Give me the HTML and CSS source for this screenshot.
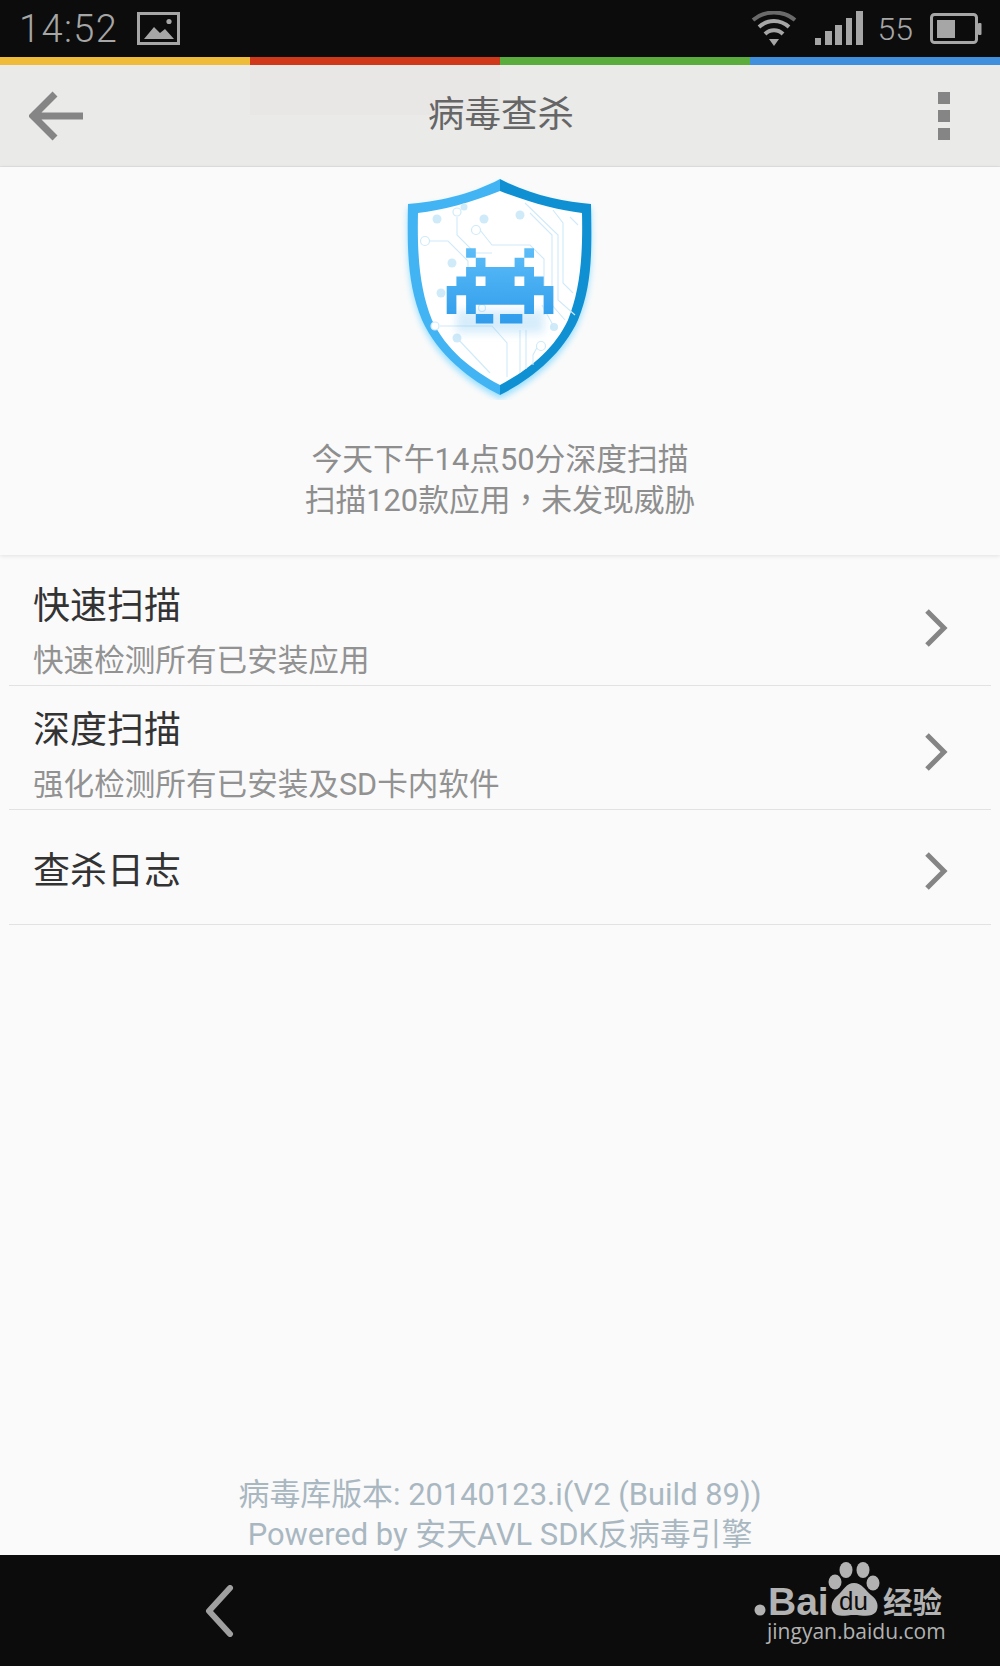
FILE: index.html
```html
<!DOCTYPE html>
<html lang="zh-CN">
<head>
  <meta charset="UTF-8" />
  <title>病毒查杀</title>
  <link rel="stylesheet" href="styles.css">
</head>
<body>
  <div class="page">
    <div class="status">
      <div class="status-left">
        <span class="clock">14:52</span>
        <svg class="pic-icon" width="44" height="34" viewBox="0 0 44 34">
          <rect x="1.5" y="1.5" width="40" height="30" fill="none" stroke="#a6a6a6" stroke-width="3"/>
          <path d="M7 27 L17 15 L23 21 L28 17 L37 27 Z" fill="#a6a6a6"/>
          <circle cx="32" cy="9.5" r="2.6" fill="#a6a6a6"/>
        </svg>
      </div>
      <div class="status-right">
        <svg class="wifi-icon" width="46" height="36" viewBox="0 0 46 36">
          <path d="M2 9 C14 -1 32 -1 44 9" fill="none" stroke="#6a6a6a" stroke-width="4"/>
          <path d="M8 16 C17 8 29 8 38 16" fill="none" stroke="#a6a6a6" stroke-width="4"/>
          <path d="M14 23 C19 18 27 18 32 23" fill="none" stroke="#a6a6a6" stroke-width="4"/>
          <path d="M18 28 L28 28 L23 35 Z" fill="#a6a6a6"/>
        </svg>
        <svg class="signal-icon" width="48" height="34" viewBox="0 0 48 34">
          <rect x="0" y="27" width="6" height="7" fill="#a6a6a6"/>
          <rect x="10" y="20" width="7" height="14" fill="#a6a6a6"/>
          <rect x="20" y="14" width="7" height="20" fill="#a6a6a6"/>
          <rect x="31" y="7" width="6" height="27" fill="#a6a6a6"/>
          <rect x="41" y="0" width="7" height="34" fill="#a6a6a6"/>
        </svg>
        <span class="level">55</span>
        <svg class="battery-icon" width="52" height="32" viewBox="0 0 52 32">
          <rect x="1.5" y="1.5" width="45" height="28" rx="3" fill="none" stroke="#a6a6a6" stroke-width="3"/>
          <rect x="7" y="7" width="18" height="18" fill="#a6a6a6"/>
          <rect x="48" y="10" width="3.5" height="12" rx="1" fill="#a6a6a6"/>
        </svg>
      </div>
    </div>

    <div class="stripe">
      <span class="stripe-yellow"></span>
      <span class="stripe-red"></span>
      <span class="stripe-green"></span>
      <span class="stripe-blue"></span>
    </div>

    <div class="toolbar">
      <svg class="back-arrow" width="54" height="50" viewBox="0 0 54 50">
        <path d="M54 25 L5 25 M26 3 L4 25 L26 47" fill="none" stroke="#858585" stroke-width="7"/>
      </svg>
      <div class="toolbar-title">病毒查杀</div>
      <div class="more-dots"><span></span><span></span><span></span></div>
    </div>

    <div class="summary">
      <svg class="shield" width="200" height="230" viewBox="20 5 200 230">
        <defs>
          <linearGradient id="invaderFill" x1="0" y1="0" x2="0" y2="1">
            <stop offset="0" stop-color="#5cbdf8"/>
            <stop offset="1" stop-color="#2f9ceb"/>
          </linearGradient>
          <filter id="glow" x="-20%" y="-20%" width="140%" height="140%">
            <feGaussianBlur stdDeviation="3"/>
          </filter>
          <filter id="shadow" x="-40%" y="-80%" width="180%" height="260%">
            <feGaussianBlur stdDeviation="0.45"/>
          </filter>
          <filter id="slight" x="-5%" y="-5%" width="110%" height="110%">
            <feGaussianBlur stdDeviation="0.05"/>
          </filter>
        </defs>
        <path d="M120 18 C150 34 185 41 211 43 C212 94 212 124 198 159 C182 194 150 219 120 234 C90 219 58 194 42 159 C28 124 27 94 28 43 C55 41 90 34 120 18 Z" fill="#9adfff" filter="url(#glow)"/>
        <path d="M120 14 C90 30 55 37 28 39 C27 90 28 120 42 155 C58 190 90 215 120 230 Z" fill="#42b4f4"/>
        <path d="M120 14 C150 30 185 37 211 39 C212 90 212 120 198 155 C182 190 150 215 120 230 Z" fill="#0f90d2"/>
        <path d="M120 26 C150 38 178 45 202 48 C203 92 200 125 188 155 C174 185 148 205 120 220 C92 205 66 185 52 155 C40 125 37 92 38 48 C62 45 90 38 120 26 Z" fill="#fff"/>
        <g fill="none" stroke="#cfeaf9" stroke-width="1.1">
          <path d="M50 76 L68 76 L88 96 L88 110"/>
          <path d="M77 52 L77 70 L95 88 L112 88"/>
          <path d="M100 65 L112 80 L150 80 L164 94 L164 150"/>
          <path d="M145 38 L178 70 L178 135 L195 150"/>
          <path d="M173 45 L183 58 L183 118 L193 128"/>
          <path d="M150 48 L172 70 L172 140 L185 155"/>
          <path d="M198 60 L190 52"/>
          <path d="M60 161 L112 161 L127 178 L127 212"/>
          <path d="M76 172 L110 208"/>
          <path d="M140 165 L140 208"/>
          <path d="M146 165 L146 204"/>
          <path d="M160 177 L153 190 L153 200"/>
          <path d="M162 140 L174 162"/>
        </g>
        <g fill="#cfeaf9">
          <circle cx="57" cy="54" r="4.5"/>
          <circle cx="84" cy="42" r="3.5"/>
          <circle cx="104" cy="54" r="4.5"/>
          <circle cx="140" cy="50" r="4.5"/>
          <circle cx="72" cy="98" r="4.5"/>
          <circle cx="61" cy="128" r="4.5"/>
          <circle cx="77" cy="173" r="4.5"/>
          <circle cx="174" cy="162" r="4"/>
        </g>
        <g fill="#fff" stroke="#cfeaf9" stroke-width="1.2">
          <circle cx="45" cy="76" r="4.5"/>
          <circle cx="96" cy="65" r="4.5"/>
          <circle cx="77" cy="47" r="4"/>
          <circle cx="55" cy="161" r="4"/>
          <circle cx="161" cy="181" r="4.5"/>
          <circle cx="102" cy="143" r="3.5"/>
        </g>
        <g transform="translate(66.7 83.3) scale(9.7 9.4)">
          <path opacity="0.3" filter="url(#shadow)" fill="#7cc4f2" d="M1 6.6 H10 V9 H1 Z"/>
          <path fill="url(#invaderFill)" filter="url(#slight)" d="M2 0h1v1h-1z M8 0h1v1h-1z M3 1h1v1h-1z M7 1h1v1h-1z M2 2h7v1h-7z M1 3h2v1h-2z M4 3h3v1h-3z M8 3h2v1h-2z M0 4h11v1h-11z M0 5h1v1h-1z M2 5h7v1h-7z M10 5h1v1h-1z M0 6h1v1h-1z M2 6h1v1h-1z M8 6h1v1h-1z M10 6h1v1h-1z M3 7h1.8v1h-1.8z M5.5 7h2.3v1h-2.3z"/>
        </g>
      </svg>
      <p class="summary-text">今天下午14点50分深度扫描<br>扫描120款应用<span class="comma" lang="zh-TW">，</span>未发现威胁</p>
    </div>

    <div class="menu">
      <div class="menu-row">
        <div class="menu-text">
          <div class="menu-title">快速扫描</div>
          <div class="menu-sub">快速检测所有已安装应用</div>
        </div>
        <svg class="chevron" width="24" height="38" viewBox="0 0 24 38"><path d="M3 2 L20 19 L3 36" fill="none" stroke="#858585" stroke-width="5"/></svg>
      </div>
      <div class="menu-row">
        <div class="menu-text">
          <div class="menu-title">深度扫描</div>
          <div class="menu-sub">强化检测所有已安装及SD卡内软件</div>
        </div>
        <svg class="chevron" width="24" height="38" viewBox="0 0 24 38"><path d="M3 2 L20 19 L3 36" fill="none" stroke="#858585" stroke-width="5"/></svg>
      </div>
      <div class="menu-row menu-row-single">
        <div class="menu-text">
          <div class="menu-title">查杀日志</div>
        </div>
        <svg class="chevron" width="24" height="38" viewBox="0 0 24 38"><path d="M3 2 L20 19 L3 36" fill="none" stroke="#858585" stroke-width="5"/></svg>
      </div>
    </div>

    <div class="footer">
      <div>病毒库版本: 20140123.i(V2 (Build 89))</div>
      <div>Powered by 安天AVL SDK反病毒引擎</div>
    </div>

    <div class="navbar">
      <svg class="nav-back" width="30" height="52" viewBox="0 0 30 52">
        <path d="M26 3 L5 26 L26 49" fill="none" stroke="#a0a0a0" stroke-width="6" stroke-linecap="round" stroke-linejoin="round"/>
      </svg>
      <svg class="baidu-logo" width="200" height="100" viewBox="0 0 200 100">
        <g fill="#b2b2b2">
          <circle cx="11" cy="55" r="5.5"/>
          <ellipse cx="97" cy="15" rx="6.5" ry="8"/>
          <ellipse cx="114" cy="15" rx="6.5" ry="8"/>
          <ellipse cx="86" cy="27" rx="6.5" ry="7.5"/>
          <ellipse cx="124" cy="28" rx="6.5" ry="7.5"/>
          <path d="M105 28 C113 28 116 35 122 40 C129 45 130 52 127 57 C122 63 113 60 105 60 C97 60 88 63 84 57 C81 52 83 45 89 40 C95 35 97 28 105 28 Z"/>
          <text class="logo-bai" x="19" y="60">Bai</text>
          <text class="logo-cjk" x="134" y="58">经验</text>
          <text class="logo-url" x="18" y="84">jingyan.baidu.com</text>
        </g>
        <text class="logo-du" x="90" y="55">du</text>
      </svg>
    </div>
  </div>
</body>
</html>
```

FILE: styles.css
```css
body { margin: 0; font-family: Roboto, "Noto Sans CJK SC", sans-serif; background: #fafafa; }
.page { display: flex; flex-direction: column; height: 1666px; overflow: hidden; }

.status { height: 57px; background: #0c0c0c; color: #a6a6a6; display: flex; justify-content: space-between; align-items: center; box-sizing: border-box; padding: 0 18px 0 19px; }
.status-left { display: flex; align-items: center; }
.clock { font-size: 38px; letter-spacing: 1.4px; font-weight: 300; }
.pic-icon { margin-left: 19px; }
.status-right { display: flex; align-items: center; }
.signal-icon { margin-left: 18px; margin-top: -2px; }
.level { font-size: 32px; font-weight: 300; margin-left: 15px; }
.battery-icon { margin-left: 17px; }

.stripe { display: flex; height: 8px; }
.stripe span { flex: 1; }
.stripe-yellow { background: #eebc38; }
.stripe-red { background: #cf3818; }
.stripe-green { background: #5aad3c; }
.stripe-blue { background: #3f8fdc; }

.toolbar { height: 102px; box-sizing: border-box; background: linear-gradient(#e8e7e6, #e8e7e6) 250px 0 / 250px 50px no-repeat #eaeae9; border-bottom: 1px solid #e0e0e0; display: flex; align-items: center; padding: 0 50px 0 29px; }
.back-arrow { flex: none; }
.toolbar-title { flex: 1; text-align: center; font-size: 36.5px; color: #666; margin-left: -19px; padding-bottom: 8px; }
.more-dots { display: flex; flex-direction: column; gap: 6px; }
.more-dots span { width: 12px; height: 12px; background: #858585; }

.summary { background: #fafafa; padding-top: 3px; height: 385px; text-align: center; box-shadow: 0 1px 4px rgba(0,0,0,0.1); }
.shield { display: block; margin: 0 auto; }
.summary-text { margin: 39px 0 0; font-size: 30.8px; line-height: 41px; color: #8e8e8e; }
.comma { font-family: "Noto Sans CJK TC", sans-serif; line-height: 0; }
.logo-bai { font-family: "Liberation Sans", sans-serif; font-weight: bold; font-size: 39px; }
.logo-cjk { font-family: "Noto Sans CJK SC", sans-serif; font-weight: bold; font-size: 29.5px; }
.logo-url { font-family: "Open Sans", sans-serif; font-size: 21px; }
.logo-du { font-family: "Liberation Sans", sans-serif; font-size: 26px; fill: #0c0c0c; }

.menu { padding-top: 7px; }
.menu-row { display: flex; justify-content: space-between; align-items: center; height: 124px; box-sizing: border-box; margin: 0 9px; padding: 0 43px 0 24px; border-bottom: 1px solid #e2e2e2; }
.menu-row-single { height: 115px; }
.menu-text { padding-top: 18px; }
.menu-row-single .menu-text { padding-top: 10px; }
.menu-title { font-size: 37px; line-height: 44px; color: #333; }
.menu-sub { font-size: 30.6px; line-height: 40px; color: #929292; margin-top: 12px; }
.chevron { flex: none; margin-top: 8px; }

.footer { margin-top: auto; font-size: 30.9px; line-height: 40px; text-align: center; color: #a9b7c1; }

.navbar { height: 111px; flex: none; background: #0c0c0c; display: flex; justify-content: space-between; align-items: flex-start; padding: 0 51px 0 204px; }
.nav-back { margin-top: 30px; }
```
